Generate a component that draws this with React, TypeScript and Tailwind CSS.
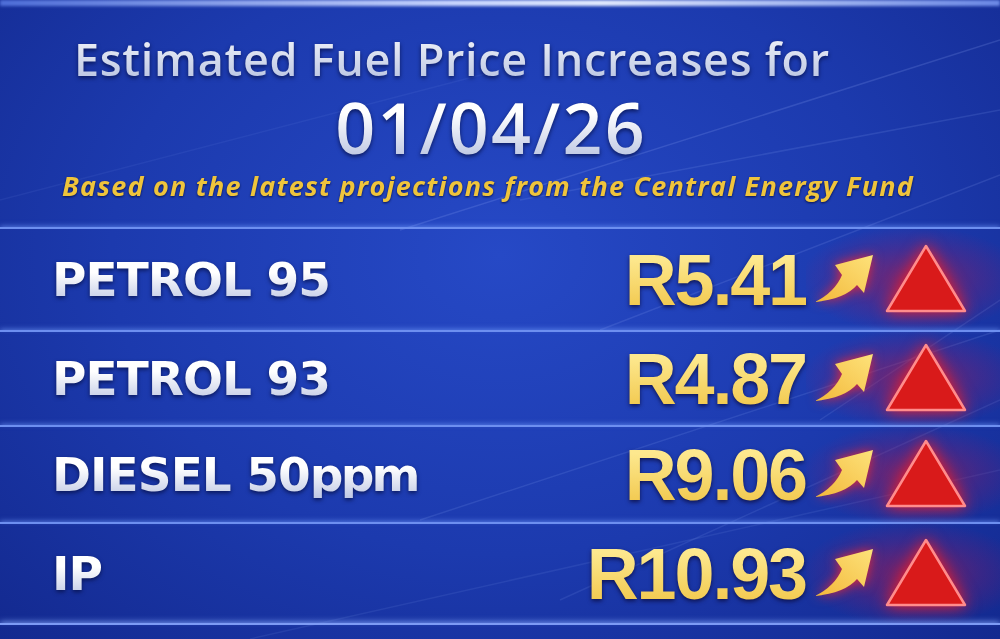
import React from 'react';

const rows = [
  { label: 'PETROL 95', unit: '', price: 'R5.41', h: 'h-[103px]' },
  { label: 'PETROL 93', unit: '', price: 'R4.87', h: 'h-[95px]' },
  { label: 'DIESEL 50', unit: 'ppm', price: 'R9.06', h: 'h-[97px]' },
  { label: 'IP', unit: '', price: 'R10.93', h: 'h-[101px]' },
];

function SwooshArrow() {
  return (
    <svg width="60" height="50" viewBox="0 0 60 50" className="drop-shadow-[0_0_6px_rgba(255,40,40,0.9)]">
      <defs>
        <linearGradient id="arrowFill" x1="0" y1="1" x2="1" y2="0">
          <stop offset="0" stopColor="#f3b83a" />
          <stop offset="1" stopColor="#fde27a" />
        </linearGradient>
      </defs>
      <path d="M59 1 L50 39 L43 31 Q31 45 1 48 Q21 38 28 21 L21 11 Z" fill="url(#arrowFill)" />
    </svg>
  );
}

function RedTriangle() {
  return (
    <svg width="84" height="72" viewBox="0 0 84 72" className="drop-shadow-[0_0_8px_rgba(255,30,30,0.95)]">
      <polygon points="42,3 81,68 3,68" fill="#d91a1a" stroke="#ff8c8c" strokeWidth="2.5" strokeLinejoin="round" />
    </svg>
  );
}

export default function App() {
  return (
    <div className="relative w-[1000px] h-[639px] overflow-hidden bg-[radial-gradient(ellipse_at_50%_40%,#2649c6_0%,#1c3aae_55%,#13298f_100%)]">
      {/* light streaks in the backdrop */}
      <svg className="absolute inset-0 pointer-events-none" width="1000" height="639">
        <g stroke="#9fb8ff" strokeWidth="1.5" fill="none">
          <line x1="400" y1="230" x2="1000" y2="40" opacity="0.18" />
          <line x1="520" y1="200" x2="1000" y2="110" opacity="0.14" />
          <line x1="600" y1="330" x2="1000" y2="175" opacity="0.15" />
          <line x1="820" y1="420" x2="1000" y2="300" opacity="0.13" />
          <line x1="420" y1="520" x2="1000" y2="330" opacity="0.14" />
          <line x1="560" y1="600" x2="1000" y2="400" opacity="0.12" />
          <line x1="250" y1="639" x2="1000" y2="470" opacity="0.1" />
          <line x1="0" y1="200" x2="500" y2="70" opacity="0.08" />
        </g>
      </svg>

      {/* glowing top edge */}
      <div className="absolute top-0 left-0 right-0 h-[6px] bg-[linear-gradient(90deg,#4f6fd8,#c9d6ff_45%,#e4ecff_60%,#6d8ae6)] blur-[1.5px]" />

      <div className="relative flex flex-col">
        <header className="h-[227px] flex flex-col">
          <h1 className="ml-[74px] pt-[36px] leading-none text-[45px] font-semibold tracking-[0.015em] font-['Open_Sans',sans-serif] bg-[linear-gradient(180deg,#ffffff_30%,#b9c4e2_100%)] bg-clip-text text-transparent drop-shadow-[0_2px_2px_rgba(5,15,70,0.8)] self-start">
            Estimated Fuel Price Increases for
          </h1>
          <div className="self-center ml-[-18px] mt-[11px] leading-none text-[70px] font-semibold tracking-[0.03em] font-['Open_Sans',sans-serif] bg-[linear-gradient(180deg,#ffffff_30%,#b6c1e0_100%)] bg-clip-text text-transparent drop-shadow-[0_2px_2px_rgba(5,15,70,0.8)]">
            01/04/26
          </div>
          <p className="self-center ml-[-24px] mt-[10px] leading-none text-[27px] font-bold italic tracking-[0.045em] font-['Open_Sans',sans-serif] text-[#efc43c] drop-shadow-[0_1px_1px_rgba(5,15,70,0.9)]">
            Based on the latest projections from the Central Energy Fund
          </p>
        </header>

        {rows.map((r) => (
          <div
            key={r.price}
            className={`${r.h} flex items-center border-t-2 border-[#6d8ff0] shadow-[0_-1px_5px_rgba(120,160,255,0.6)]`}
          >
            <div className="pl-[52px] w-[580px] leading-none text-[47px] font-bold tracking-[-0.02em] font-['DejaVu_Sans',sans-serif] bg-[linear-gradient(180deg,#ffffff_35%,#bfc8e4_100%)] bg-clip-text text-transparent drop-shadow-[0_2px_2px_rgba(5,15,70,0.8)]">
              {r.label}
              {r.unit && <span className="tracking-[-0.06em]">{r.unit}</span>}
            </div>
            <div className="w-[226px] text-right leading-none text-[72px] font-bold tracking-[-0.03em] font-['Liberation_Sans',sans-serif] bg-[linear-gradient(180deg,#fde88e_20%,#f0c445_100%)] bg-clip-text text-transparent drop-shadow-[0_2px_2px_rgba(10,10,60,0.8)]">
              {r.price}
            </div>
            <div className="flex-1 h-full flex items-center bg-[radial-gradient(ellipse_at_55%_50%,rgba(200,20,60,0.55)_0%,rgba(160,20,90,0.25)_45%,transparent_75%)]">
              <div className="ml-[8px] mt-[-2px]">
                <SwooshArrow />
              </div>
              <div className="ml-[10px] mt-[-1px]">
                <RedTriangle />
              </div>
            </div>
          </div>
        ))}
        <div className="h-[16px] border-t-2 border-[#7d9bf5] shadow-[0_-1px_6px_rgba(140,175,255,0.8)]" />
      </div>
    </div>
  );
}
